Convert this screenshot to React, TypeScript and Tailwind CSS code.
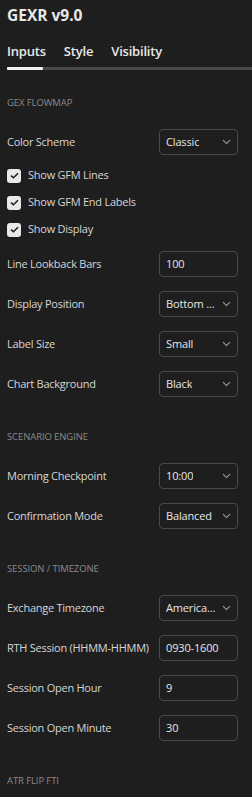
import React from "react";

const font = { fontFamily: '"Open Sans", "Noto Sans", sans-serif' };

function Chevron() {
  return (
    <svg width="9" height="6" viewBox="0 0 9 6" className="shrink-0">
      <path d="M1 1.2 L4.5 4.6 L8 1.2" fill="none" stroke="#a0a0a0" strokeWidth="1.1" />
    </svg>
  );
}

function Header({ text }: { text: string }) {
  return (
    <div className="h-[52px] pt-[27px] text-[9.5px] leading-[12px] text-[#8a8a8a] tracking-[-0.1px]">
      {text}
    </div>
  );
}

function SelectRow({ label, value }: { label: string; value: string }) {
  return (
    <div className="h-[40px] flex items-center justify-between pr-[14px]">
      <span className="text-[11px] tracking-[-0.25px] text-[#d6d6d6]">{label}</span>
      <div className="w-[79px] h-[26px] rounded-[4px] border border-[#4a4a4a] flex items-center justify-between pl-[6px] pr-[6px]">
        <span className="text-[11px] tracking-[-0.15px] text-[#e6e6e6] truncate">{value}</span>
        <Chevron />
      </div>
    </div>
  );
}

function InputRow({ label, value }: { label: string; value: string }) {
  return (
    <div className="h-[40px] flex items-center justify-between pr-[14px]">
      <span className="text-[11px] tracking-[-0.25px] text-[#d6d6d6]">{label}</span>
      <div className="w-[79px] h-[26px] rounded-[4px] border border-[#4a4a4a] flex items-center pl-[6px]">
        <span className="text-[11px] tracking-[-0.15px] text-[#e6e6e6]">{value}</span>
      </div>
    </div>
  );
}

function Box() {
  return (
    <div className="w-[14px] h-[14px] rounded-[3px] bg-[#e8e8e8] flex items-center justify-center">
      <svg width="9" height="7" viewBox="0 0 9 7">
        <path d="M1 3.6 L3.4 5.8 L8 1.2" fill="none" stroke="#1e1e1e" strokeWidth="1.5" />
      </svg>
    </div>
  );
}

function CheckRow({ label }: { label: string }) {
  return (
    <div className="h-[27px] flex items-center gap-[7px]">
      <Box />
      <span className="text-[11px] tracking-[-0.25px] text-[#d6d6d6]">{label}</span>
    </div>
  );
}

export default function App() {
  return (
    <div className="w-[252px] h-[797px] bg-[#1e1e1e] overflow-hidden" style={font}>
      <div className="pl-[7px]">
        <div className="h-[32px] flex items-center text-[15.5px] font-bold text-[#e8e8e8]">GEXR v9.0</div>
        <div className="h-[35px] flex items-end pb-[6px] gap-[18px] text-[13px] tracking-[-0.2px] font-semibold text-[#e8e8e8]">
          <span>Inputs</span>
          <span>Style</span>
          <span>Visibility</span>
        </div>
        <div className="h-[3px] bg-[#4a4a4a] relative">
          <div className="absolute left-0 top-0 h-[3px] w-[36px] bg-[#f0f0f0] rounded-[1px]" />
        </div>
        <Header text="GEX FLOWMAP" />
        <SelectRow label="Color Scheme" value="Classic" />
        <CheckRow label="Show GFM Lines" />
        <CheckRow label="Show GFM End Labels" />
        <div className="h-[28px] flex items-center gap-[7px] pb-px">
          <Box />
          <span className="text-[11px] tracking-[-0.25px] text-[#d6d6d6]">Show Display</span>
        </div>
        <InputRow label="Line Lookback Bars" value="100" />
        <SelectRow label="Display Position" value="Bottom ..." />
        <SelectRow label="Label Size" value="Small" />
        <SelectRow label="Chart Background" value="Black" />
        <Header text="SCENARIO ENGINE" />
        <SelectRow label="Morning Checkpoint" value="10:00" />
        <SelectRow label="Confirmation Mode" value="Balanced" />
        <Header text="SESSION / TIMEZONE" />
        <SelectRow label="Exchange Timezone" value="America..." />
        <InputRow label="RTH Session (HHMM-HHMM)" value="0930-1600" />
        <InputRow label="Session Open Hour" value="9" />
        <InputRow label="Session Open Minute" value="30" />
        <Header text="ATR FLIP FTI" />
      </div>
    </div>
  );
}
